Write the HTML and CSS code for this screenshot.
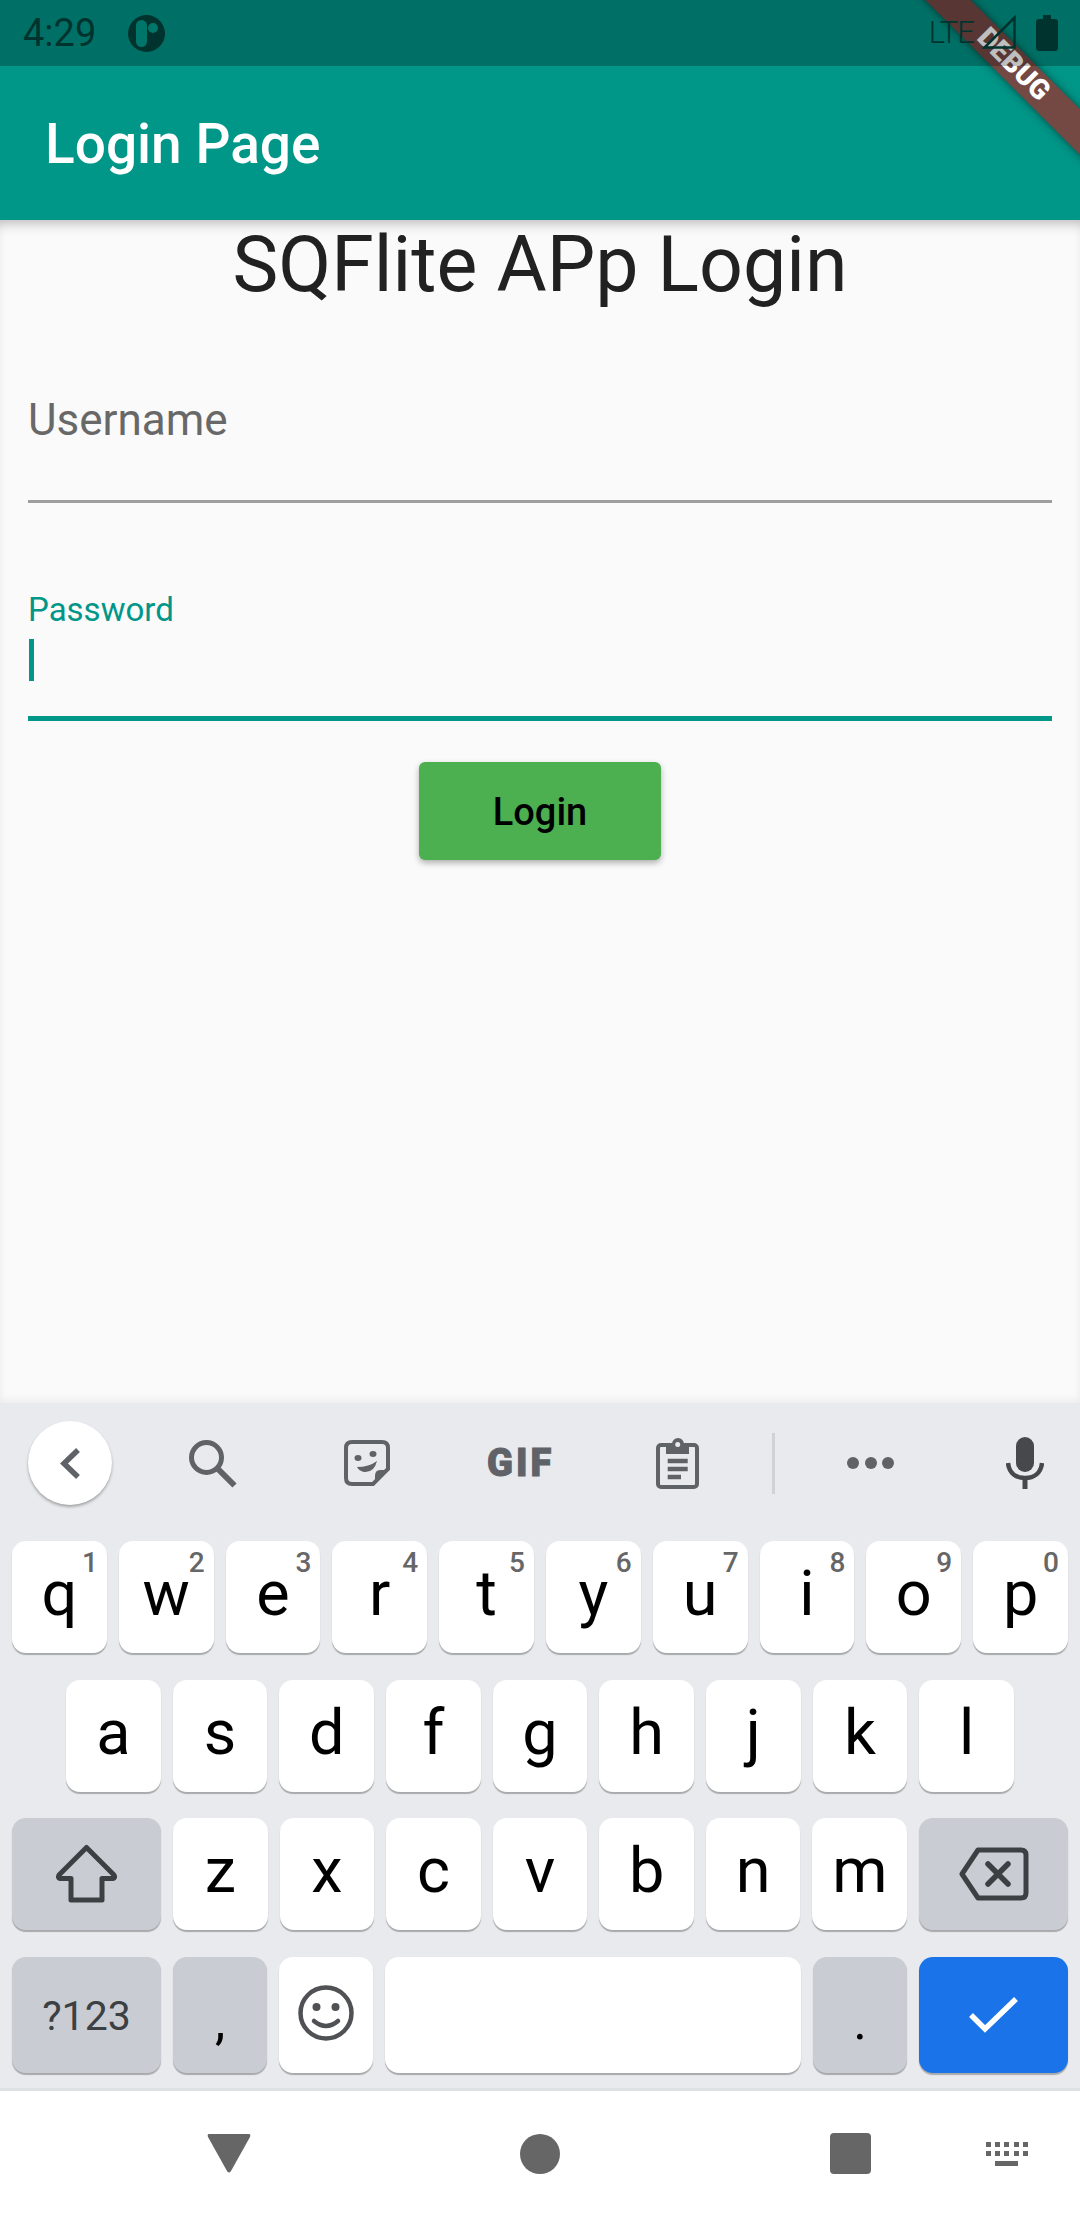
FILE: index.html
```html
<!DOCTYPE html>
<html>
  <head>
    <meta charset="utf-8" />
    <title>Login Page</title>
    <link rel="stylesheet" href="styles.css">
  </head>
  <body>
    <header class="app-header">
      <div class="status-bar">
        <span class="status-time">4:29</span>
        <svg class="status-app" viewBox="0 0 37 37">
          <circle cx="18.5" cy="18.5" r="18.5" fill="#00332e" />
          <rect x="8" y="5" width="11" height="27" rx="5.5" fill="#00756a" />
          <circle cx="25" cy="13" r="5" fill="#00756a" />
        </svg>
        <span class="status-lte">LTE</span>
        <svg class="status-signal" viewBox="0 0 34 34">
          <path d="M32.5 2.5V32.5H2.5Z" fill="none" stroke="#00332e" stroke-width="2.5" />
        </svg>
        <svg class="status-battery" viewBox="0 0 22 36">
          <path d="M7 0H15V4H19Q22 4 22 7V33Q22 36 19 36H3Q0 36 0 33V7Q0 4 3 4H7Z" fill="#00332e" />
        </svg>
      </div>
      <h1 class="app-title">Login Page</h1>
      <div class="debug-banner">DEBUG</div>
    </header>

    <main class="login">
      <h2 class="login-heading">SQFlite APp Login</h2>
      <div class="field field-idle">
        <span class="field-hint">Username</span>
      </div>
      <div class="field field-focused">
        <span class="field-label">Password</span>
        <span class="field-cursor"></span>
      </div>
      <div class="login-actions">
        <button class="login-button">Login</button>
      </div>
    </main>

    <section class="keyboard">
      <div class="toolbar">
        <div class="toolbar-back">
          <svg width="21" height="33" viewBox="0 0 21 33">
            <path d="M18 3L4 16.500L18 30" fill="none" stroke="#5f6368" stroke-width="5.500" />
          </svg>
        </div>
        <svg class="tool-search" width="48" height="48" viewBox="0 0 48 48">
          <circle cx="17.500" cy="17.500" r="15" fill="none" stroke="#5f6368" stroke-width="5" />
          <path d="M28 28L45.500 45.500" fill="none" stroke="#5f6368" stroke-width="6" />
        </svg>
        <svg class="tool-sticker" width="46" height="46" viewBox="0 0 46 46">
          <path d="M8 2H38Q44 2 44 8V29L29 44H8Q2 44 2 38V8Q2 2 8 2Z" fill="none" stroke="#5f6368" stroke-width="4" />
          <path d="M44 30H36Q31 30 31 36V44Z" fill="#5f6368" />
          <ellipse cx="14" cy="18" rx="3.500" ry="3" fill="#5f6368" />
          <ellipse cx="29" cy="14" rx="3.500" ry="3" fill="#5f6368" />
          <path d="M13 27Q25 27 33 21Q30 33 20 32Q15 31 13 27Z" fill="#5f6368" />
        </svg>
        <span class="tool-gif">GIF</span>
        <svg class="tool-clipboard" width="43" height="51" viewBox="0 0 43 51">
          <rect x="2" y="7" width="39" height="42" rx="3" fill="none" stroke="#5f6368" stroke-width="4" />
          <path d="M10 6H16A6 6 0 0 1 28 6H33V16H10Z" fill="#5f6368" />
          <circle cx="21.700" cy="6.500" r="2.500" fill="#e8eaed" />
          <path d="M11.700 23H31.700M11.700 31H31.700M11.700 39H25" fill="none" stroke="#5f6368" stroke-width="4.500" />
        </svg>
        <span class="tool-divider"></span>
        <div class="tool-more">
          <span></span>
          <span></span>
          <span></span>
        </div>
        <svg class="tool-mic" width="38" height="52" viewBox="0 0 38 52">
          <rect x="10" y="0" width="18" height="35" rx="9" fill="#46484b" />
          <path d="M2 26C3 36 10 41 19 41C28 41 35 36 36 26" fill="none" stroke="#46484b" stroke-width="4.500" />
          <path d="M19 40V52" fill="none" stroke="#46484b" stroke-width="5" />
        </svg>
      </div>

      <div class="key-row">
        <div class="key">q<sup class="key-num">1</sup></div>
        <div class="key">w<sup class="key-num">2</sup></div>
        <div class="key">e<sup class="key-num">3</sup></div>
        <div class="key">r<sup class="key-num">4</sup></div>
        <div class="key">t<sup class="key-num">5</sup></div>
        <div class="key">y<sup class="key-num">6</sup></div>
        <div class="key">u<sup class="key-num">7</sup></div>
        <div class="key">i<sup class="key-num">8</sup></div>
        <div class="key">o<sup class="key-num">9</sup></div>
        <div class="key">p<sup class="key-num">0</sup></div>
      </div>
      <div class="key-row key-row-inset">
        <div class="key">a</div>
        <div class="key">s</div>
        <div class="key">d</div>
        <div class="key">f</div>
        <div class="key">g</div>
        <div class="key">h</div>
        <div class="key">j</div>
        <div class="key">k</div>
        <div class="key">l</div>
      </div>
      <div class="key-row">
        <div class="key key-wide key-gray">
          <svg width="62" height="60" viewBox="0 0 62 60">
            <path d="M30.500 3.500L58 31Q59.500 34 57 34.500H46V56H15V34.500H4Q1.500 34 3 31Z" fill="none" stroke="#3c4043" stroke-width="5" stroke-linejoin="round" />
          </svg>
        </div>
        <div class="key">z</div>
        <div class="key">x</div>
        <div class="key">c</div>
        <div class="key">v</div>
        <div class="key">b</div>
        <div class="key">n</div>
        <div class="key">m</div>
        <div class="key key-wide key-gray">
          <svg width="70" height="54" viewBox="0 0 70 54">
            <path d="M3 27L19 3H62Q67 3 67 8V46Q67 51 62 51H19Z" fill="none" stroke="#3c4043" stroke-width="5" stroke-linejoin="round" />
            <path d="M29 17L49 37M49 17L29 37" fill="none" stroke="#3c4043" stroke-width="5.500" stroke-linecap="round" />
          </svg>
        </div>
      </div>
      <div class="key-row key-row-last">
        <div class="key key-wide key-gray key-symbols">?123</div>
        <div class="key key-gray key-punct">,</div>
        <div class="key key-emoji">
          <svg width="56" height="56" viewBox="0 0 56 56">
            <circle cx="28" cy="28" r="25.500" fill="none" stroke="#505154" stroke-width="4.500" />
            <circle cx="18.500" cy="22" r="4" fill="#505154" />
            <circle cx="37.500" cy="22" r="4" fill="#505154" />
            <path d="M16 36Q28 46 40 36" fill="none" stroke="#505154" stroke-width="4.500" stroke-linecap="round" />
          </svg>
        </div>
        <div class="key key-space"></div>
        <div class="key key-gray key-punct">.</div>
        <div class="key key-wide key-enter">
          <svg width="50" height="38" viewBox="0 0 50 38">
            <path d="M2 19L16 33L47 3" fill="none" stroke="#fff" stroke-width="5.500" />
          </svg>
        </div>
      </div>
    </section>

    <nav class="nav-bar">
      <svg class="nav-back" width="44" height="39" viewBox="0 0 44 39">
        <path d="M2 0H42Q44 0 43 3L24 37Q22 40 20 37L1 3Q0 0 2 0Z" fill="#666" />
      </svg>
      <span class="nav-home"></span>
      <span class="nav-recent"></span>
      <svg class="nav-keyboard" width="42" height="24" viewBox="0 0 42 24">
        <path d="M0 0h5v5H0zM9 0h5v5H9zM18 0h5v5h-5zM28 0h5v5h-5zM37 0h5v5h-5zM0 9h5v5H0zM9 9h5v5H9zM18 9h5v5h-5zM28 9h5v5h-5zM37 9h5v5h-5zM9 19h23v5H9z" fill="#666" />
      </svg>
    </nav>
  </body>
</html>
```

FILE: styles.css
```css
* {
  margin: 0;
  padding: 0;
  box-sizing: border-box;
}
html {
  overflow: hidden;
}
body {
  width: 1080px;
  height: 2220px;
  display: flex;
  flex-direction: column;
  overflow: hidden;
  font-family: Roboto, "Noto Sans", sans-serif;
  background: #fafafa;
}

/* app bar */
.app-header {
  position: relative;
  height: 220px;
  overflow: hidden;
  background: #009688;
  flex-shrink: 0;
}
.status-bar {
  position: relative;
  z-index: 2;
  height: 66px;
  display: flex;
  align-items: center;
  padding-left: 23px;
  padding-right: 22px;
  background: rgba(0, 0, 0, 0.25);
}
.status-time {
  font-size: 38px;
  line-height: 66px;
  color: #00332e;
}
.status-app {
  width: 37px;
  height: 37px;
  margin-left: 32px;
}
.status-lte {
  margin-left: auto;
  font-size: 31px;
  font-weight: 300;
  line-height: 66px;
  letter-spacing: -1px;
  color: #00332e;
}
.status-signal {
  width: 34px;
  height: 34px;
  margin-left: 8px;
  margin-bottom: 2px;
}
.status-battery {
  width: 22px;
  height: 36px;
  margin-left: 20px;
}
.app-title {
  padding-left: 45px;
  font-size: 55px;
  font-weight: 500;
  line-height: 156px;
  color: white;
}
.debug-banner {
  position: absolute;
  left: 863px;
  top: 49px;
  width: 300px;
  height: 32px;
  transform: rotate(45deg);
  background: rgba(183, 28, 28, 0.63);
  box-shadow: 0 0 8px rgba(0, 0, 0, 0.5);
  color: white;
  font-size: 28px;
  font-weight: 900;
  line-height: 30px;
  text-align: center;
}

/* login form */
.login {
  flex: 1;
  position: relative;
  padding: 0 28px;
  box-shadow: inset 0 10px 14px -8px rgba(0, 0, 0, 0.3);
}
.login-heading {
  font-size: 77px;
  font-weight: 400;
  line-height: 90px;
  color: #212121;
  text-align: center;
}
.field {
  position: relative;
}
.field-idle {
  height: 193px;
  padding-top: 84px;
  border-bottom: 3px solid #9e9e9e;
}
.field-hint {
  font-size: 44px;
  line-height: 52px;
  color: #686868;
}
.field-focused {
  height: 218px;
  padding-top: 87px;
  border-bottom: 5px solid #009688;
}
.field-label {
  display: block;
  font-size: 33px;
  line-height: 40px;
  color: #009688;
}
.field-cursor {
  display: block;
  width: 5px;
  height: 42px;
  margin-top: 9px;
  margin-left: 1px;
  background: #009688;
}
.login-actions {
  display: flex;
  justify-content: center;
  margin-top: 41px;
}
.login-button {
  width: 242px;
  height: 98px;
  border: none;
  border-radius: 6px;
  background: #4caf50;
  box-shadow: 0 3px 6px rgba(0, 0, 0, 0.3);
  font-family: Roboto, sans-serif;
  font-size: 38px;
  font-weight: 500;
  padding-top: 2px;
  color: #000;
}

/* keyboard */
.keyboard {
  height: 688px;
  flex-shrink: 0;
  padding: 0 12px;
  background: #e8eaed;
  border-bottom: 3px solid #dfe0e2;
  box-shadow: 0 -3px 8px rgba(0, 0, 0, 0.06);
}
.toolbar {
  height: 138px;
  display: flex;
  align-items: center;
  padding-left: 16px;
  padding-bottom: 18px;
}
.toolbar-back {
  width: 84px;
  height: 84px;
  display: flex;
  align-items: center;
  justify-content: center;
  border-radius: 50%;
  background: white;
  box-shadow: 0 2px 3px rgba(0, 0, 0, 0.3);
}
.tool-search {
  margin-left: 77px;
  margin-top: 2px;
}
.tool-sticker {
  margin-left: 107px;
}
.tool-gif {
  margin-left: 97px;
  font-size: 38px;
  font-weight: 900;
  letter-spacing: 3px;
  color: #5f6368;
  -webkit-text-stroke: 1px #5f6368;
}
.tool-clipboard {
  margin-left: 102px;
}
.tool-divider {
  width: 3px;
  height: 61px;
  margin-left: 73px;
  background: #ced3d6;
}
.tool-more {
  display: flex;
  gap: 5.500px;
  margin-left: 72px;
}
.tool-more span {
  width: 12px;
  height: 12px;
  border-radius: 50%;
  background: #5f6368;
}
.tool-mic {
  margin-left: 112px;
}
.key-row {
  display: flex;
  gap: 12px;
  height: 112px;
  margin-bottom: 26.500px;
}
.key-row-inset {
  padding: 0 54px;
}
.key-row-last {
  height: 116px;
  margin-bottom: 0;
}
.key {
  position: relative;
  flex: 1;
  display: flex;
  align-items: center;
  justify-content: center;
  padding-bottom: 7px;
  border-radius: 14px;
  background: white;
  box-shadow: 0 2px 1px rgba(0, 0, 0, 0.28);
  font-size: 63px;
  color: #000;
}
.key-num {
  position: absolute;
  top: 8px;
  right: 9px;
  font-size: 28px;
  font-weight: 500;
  line-height: 28px;
  color: #666;
}
.key-wide {
  flex: 0 0 149px;
  padding-bottom: 0;
}
.key-gray {
  background: #caccd3;
}
.key-symbols {
  padding-top: 2px;
  font-size: 41px;
  color: #3c4043;
}
.key-punct {
  padding-top: 14px;
  padding-bottom: 0;
  font-size: 52px;
}
.key-emoji {
  padding-bottom: 3px;
}
.key-space {
  flex: 0 0 416px;
}
.key-enter {
  background: #1a73e8;
}

/* nav bar */
.nav-bar {
  height: 129px;
  flex-shrink: 0;
  display: flex;
  align-items: center;
  padding-left: 207px;
  padding-bottom: 4px;
  background: white;
}
.nav-home {
  width: 40px;
  height: 40px;
  margin-left: 269px;
  border-radius: 50%;
  background: #666;
}
.nav-recent {
  width: 41px;
  height: 41px;
  margin-left: 270px;
  border-radius: 4px;
  background: #666;
}
.nav-keyboard {
  margin-left: 115px;
}
```
